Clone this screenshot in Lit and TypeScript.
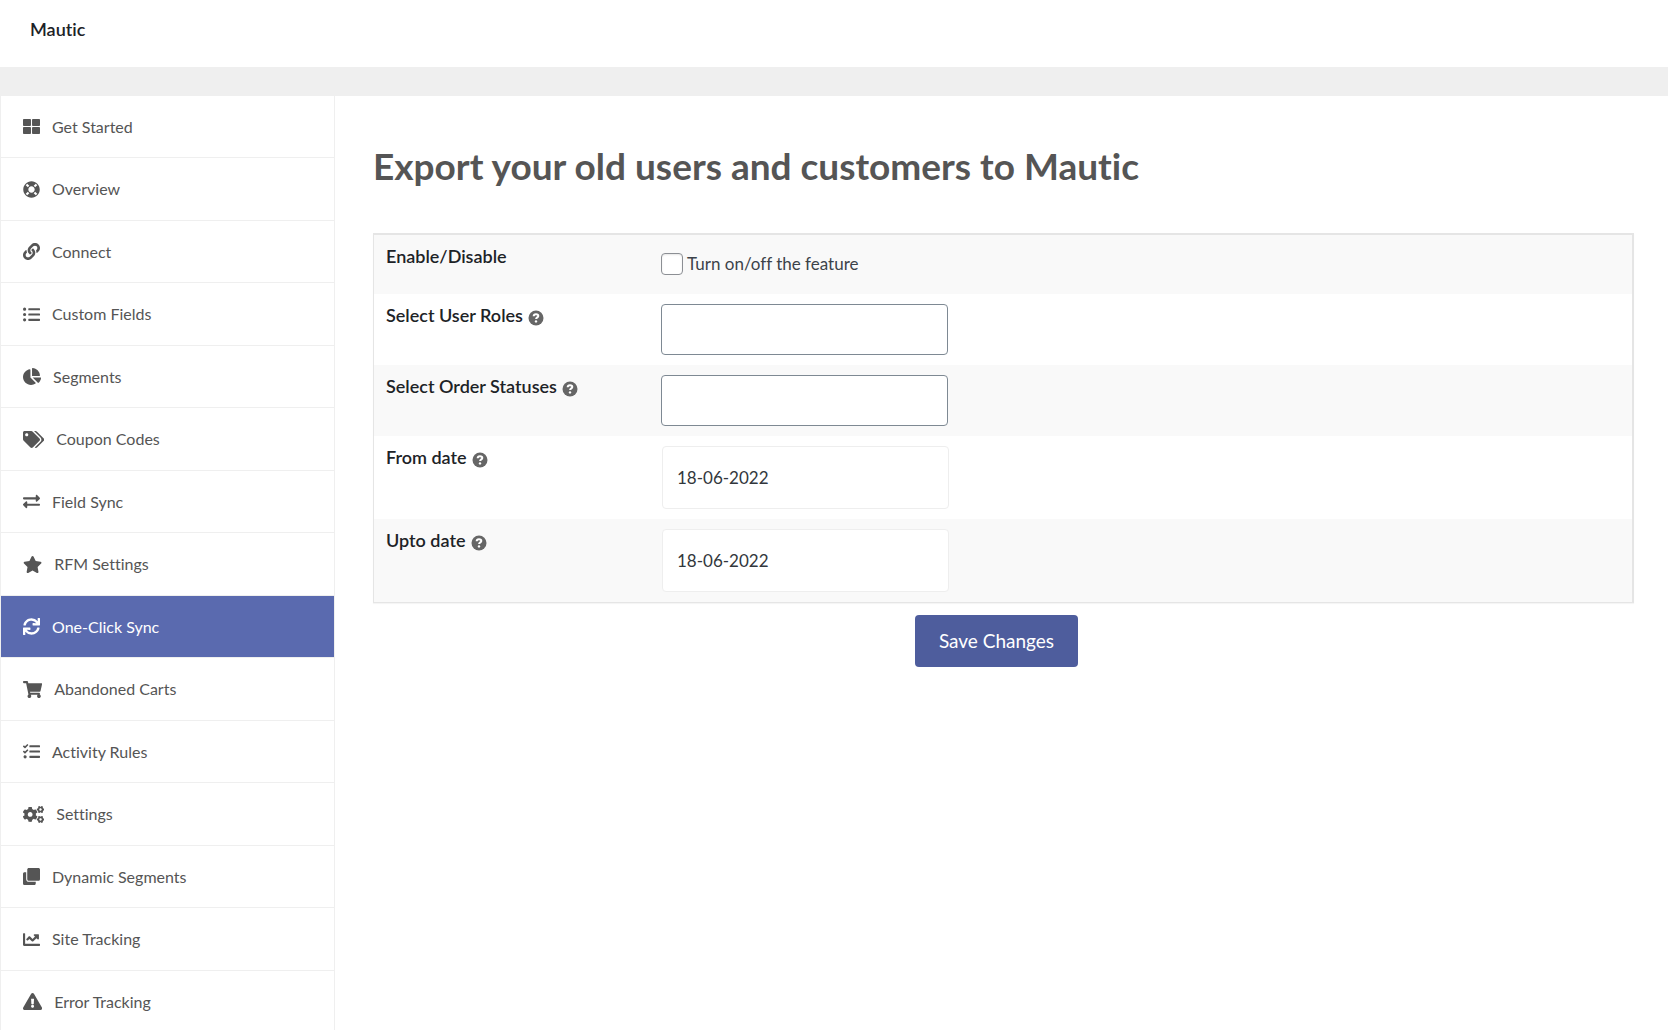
import { LitElement, html, svg, css, nothing } from "lit";
import { customElement, property, state } from "lit/decorators.js";
import { classMap } from "lit/directives/class-map.js";

const gear =
  "M512.1 191l-8.2 14.3c-3 5.3-9.4 7.5-15.1 5.4-11.8-4.4-22.6-10.7-32.1-18.6-4.6-3.8-5.8-10.5-2.8-15.7l8.2-14.3c-6.9-8-12.3-17.3-15.9-27.4h-16.5c-6 0-11.2-4.3-12.2-10.3-2-12-2.1-24.6 0-37.1 1-6 6.2-10.4 12.2-10.4h16.5c3.6-10.1 9-19.4 15.9-27.4l-8.2-14.3c-3-5.2-1.9-11.9 2.8-15.7 9.5-7.9 20.4-14.2 32.1-18.6 5.7-2.1 12.1.1 15.1 5.4l8.2 14.3c10.5-1.9 21.2-1.9 31.7 0L552 6.3c3-5.3 9.4-7.5 15.1-5.4 11.8 4.4 22.6 10.7 32.1 18.6 4.6 3.8 5.8 10.5 2.8 15.7l-8.2 14.3c6.9 8 12.3 17.3 15.9 27.4h16.5c6 0 11.2 4.3 12.2 10.3 2 12 2.1 24.6 0 37.1-1 6-6.2 10.4-12.2 10.4h-16.5c-3.6 10.1-9 19.4-15.9 27.4l8.2 14.3c3 5.2 1.9 11.9-2.8 15.7-9.5 7.9-20.4 14.2-32.1 18.6-5.7 2.1-12.1-.1-15.1-5.4l-8.2-14.3c-10.4 1.9-21.2 1.9-31.7 0zm-10.5-58.8c38.5 29.6 82.4-14.3 52.8-52.8-38.5-29.7-82.4 14.3-52.8 52.8z";

// width is the viewBox width; every glyph is 512 units tall
const ICONS: Record<string, { width: number; body: unknown }> = {
  grid: {
    width: 512,
    body: svg`<path d="M296 32h192c13.255 0 24 10.745 24 24v160c0 13.255-10.745 24-24 24H296c-13.255 0-24-10.745-24-24V56c0-13.255 10.745-24 24-24zm-80 0H24C10.745 32 0 42.745 0 56v160c0 13.255 10.745 24 24 24h192c13.255 0 24-10.745 24-24V56c0-13.255-10.745-24-24-24zM0 296v160c0 13.255 10.745 24 24 24h192c13.255 0 24-10.745 24-24V296c0-13.255-10.745-24-24-24H24c-13.255 0-24 10.745-24 24zm296 184h192c13.255 0 24-10.745 24-24V296c0-13.255-10.745-24-24-24H296c-13.255 0-24 10.745-24 24v160c0 13.255 10.745 24 24 24z"/>`,
  },
  ring: {
    width: 512,
    body: svg`<path d="M256 8C119.033 8 8 119.033 8 256s111.033 248 248 248 248-111.033 248-248S392.967 8 256 8zm173.696 119.559l-63.399 63.399c-10.987-18.559-26.67-34.252-45.255-45.255l63.399-63.399a218.396 218.396 0 0 1 45.255 45.255zM256 352c-53.019 0-96-42.981-96-96s42.981-96 96-96 96 42.981 96 96-42.981 96-96 96zM127.559 82.304l63.399 63.399c-18.559 10.987-34.252 26.67-45.255 45.255l-63.399-63.399a218.372 218.372 0 0 1 45.255-45.255zM82.304 384.441l63.399-63.399c10.987 18.559 26.67 34.252 45.255 45.255l-63.399 63.399a218.396 218.396 0 0 1-45.255-45.255zm302.137 45.255l-63.399-63.399c18.559-10.987 34.252-26.67 45.255-45.255l63.399 63.399a218.403 218.403 0 0 1-45.255 45.255z"/>`,
  },
  link: {
    width: 512,
    body: svg`<path d="M326.612 185.391c59.747 59.809 58.927 155.698.36 214.59-.11.12-.24.25-.36.37l-67.2 67.2c-59.27 59.27-155.699 59.262-214.96 0-59.27-59.26-59.27-155.7 0-214.96l37.106-37.106c9.84-9.84 26.786-3.3 27.294 10.606.648 17.722 3.826 35.527 9.69 52.721 1.986 5.822.567 12.262-3.783 16.612l-13.087 13.087c-28.026 28.026-28.905 73.66-1.155 101.96 28.024 28.579 74.086 28.749 102.325.51l67.2-67.19c28.191-28.191 28.073-73.757 0-101.83-3.701-3.694-7.429-6.564-10.341-8.569a16.037 16.037 0 0 1-6.947-12.606c-.396-10.567 3.348-21.456 11.698-29.806l21.054-21.055c5.521-5.521 14.182-6.199 20.584-1.731a152.482 152.482 0 0 1 20.522 17.197zM467.547 44.449c-59.261-59.262-155.69-59.27-214.96 0l-67.2 67.2c-.12.12-.25.25-.36.37-58.566 58.892-59.387 154.781.36 214.59a152.454 152.454 0 0 0 20.521 17.196c6.402 4.468 15.064 3.789 20.584-1.731l21.054-21.055c8.35-8.35 12.094-19.239 11.698-29.806a16.037 16.037 0 0 0-6.947-12.606c-2.912-2.005-6.64-4.875-10.341-8.569-28.073-28.073-28.191-73.639 0-101.83l67.2-67.19c28.239-28.239 74.3-28.069 102.325.51 27.75 28.3 26.872 73.934-1.155 101.96l-13.087 13.087c-4.35 4.35-5.769 10.79-3.783 16.612 5.864 17.194 9.042 34.999 9.69 52.721.509 13.906 17.454 20.446 27.294 10.606l37.106-37.106c59.271-59.259 59.271-155.699.001-214.959z"/>`,
  },
  list: {
    width: 512,
    body: svg`<path d="M48 48a48 48 0 1 0 48 48 48 48 0 0 0-48-48zm0 160a48 48 0 1 0 48 48 48 48 0 0 0-48-48zm0 160a48 48 0 1 0 48 48 48 48 0 0 0-48-48zm448 16H176a16 16 0 0 0-16 16v32a16 16 0 0 0 16 16h320a16 16 0 0 0 16-16v-32a16 16 0 0 0-16-16zm0-320H176a16 16 0 0 0-16 16v32a16 16 0 0 0 16 16h320a16 16 0 0 0 16-16V80a16 16 0 0 0-16-16zm0 160H176a16 16 0 0 0-16 16v32a16 16 0 0 0 16 16h320a16 16 0 0 0 16-16v-32a16 16 0 0 0-16-16z"/>`,
  },
  pie: {
    width: 544,
    body: svg`<path d="M527.79 288H290.5l158.03 158.03c6.04 6.04 15.98 6.53 22.19.68 38.7-36.46 65.32-85.61 73.13-140.86 1.34-9.46-6.51-17.85-16.06-17.85zm-15.83-64.8C503.72 103.74 408.26 8.28 288.8.04 279.68-.59 272 7.1 272 16.24V240h223.77c9.14 0 16.82-7.68 16.19-16.8zM224 288V50.71c0-9.55-8.39-17.4-17.84-16.06C86.99 51.49-4.1 155.6.14 280.37 4.5 408.51 114.83 513.59 243.03 511.98c50.4-.63 96.97-16.87 135.26-44.03 7.9-5.6 8.42-17.23 1.57-24.08L224 288z"/>`,
  },
  tags: {
    width: 640,
    body: svg`<path d="M497.941 225.941L286.059 14.059A48 48 0 0 0 252.118 0H48C21.49 0 0 21.49 0 48v204.118a48 48 0 0 0 14.059 33.941l211.882 211.882c18.744 18.745 49.136 18.746 67.882 0l204.118-204.118c18.745-18.745 18.745-49.137 0-67.882zM112 160c-26.51 0-48-21.49-48-48s21.49-48 48-48 48 21.49 48 48-21.49 48-48 48zm513.941 133.823L421.823 497.941c-18.745 18.745-49.137 18.745-67.882 0l-.36-.36L527.64 323.522c16.999-16.999 26.36-39.6 26.36-63.64s-9.362-46.641-26.36-63.64L331.397 0h48.721a48 48 0 0 1 33.941 14.059l211.882 211.882c18.745 18.745 18.745 49.137 0 67.882z"/>`,
  },
  exchange: {
    width: 512,
    body: svg`<path d="M0 168v-16c0-13.255 10.745-24 24-24h360V80c0-21.367 25.899-32.042 40.971-16.971l80 80c9.372 9.373 9.372 24.569 0 33.941l-80 80C409.956 271.982 384 261.456 384 240v-48H24c-13.255 0-24-10.745-24-24zm488 152H128v-48c0-21.314-25.862-32.08-40.971-16.971l-80 80c-9.372 9.373-9.372 24.569 0 33.941l80 80C102.057 463.997 128 453.437 128 432v-48h360c13.255 0 24-10.745 24-24v-16c0-13.255-10.745-24-24-24z"/>`,
  },
  star: {
    width: 576,
    body: svg`<path d="M259.3 17.8L194 150.2 47.9 171.5c-26.2 3.8-36.7 36.1-17.7 54.6l105.7 103-25 145.5c-4.5 26.3 23.2 46 46.4 33.7L288 439.6l130.7 68.7c23.2 12.2 50.9-7.4 46.4-33.7l-25-145.5 105.7-103c19-18.5 8.5-50.8-17.7-54.6L382 150.2 316.7 17.8c-11.7-23.6-45.6-23.9-57.4 0z"/>`,
  },
  sync: {
    width: 512,
    body: svg`<path d="M440.65 12.57l4 82.77A247.16 247.16 0 0 0 255.83 8C134.73 8 33.91 94.92 12.29 209.82A12 12 0 0 0 24.09 224h49.05a12 12 0 0 0 11.67-9.26 175.91 175.91 0 0 1 317-56.94l-101.46-4.86a12 12 0 0 0-12.57 12v47.41a12 12 0 0 0 12 12H500a12 12 0 0 0 12-12V12a12 12 0 0 0-12-12h-47.37a12 12 0 0 0-11.98 12.57zM255.83 432a175.61 175.61 0 0 1-146-77.8l101.8 4.87a12 12 0 0 0 12.57-12v-47.4a12 12 0 0 0-12-12H12a12 12 0 0 0-12 12V500a12 12 0 0 0 12 12h47.35a12 12 0 0 0 12-12.6l-4.15-82.57A247.17 247.17 0 0 0 255.83 504c121.11 0 221.93-86.92 243.55-201.82a12 12 0 0 0-11.8-14.18h-49.05a12 12 0 0 0-11.67 9.26A175.86 175.86 0 0 1 255.83 432z"/>`,
  },
  cart: {
    width: 576,
    body: svg`<path d="M528.12 301.319l47.273-208C578.806 78.301 567.391 64 551.99 64H159.208l-9.166-44.81C147.758 8.021 137.93 0 126.529 0H24C10.745 0 0 10.745 0 24v16c0 13.255 10.745 24 24 24h69.883l70.248 343.435C147.325 417.1 136 435.222 136 456c0 30.928 25.072 56 56 56s56-25.072 56-56c0-15.674-6.447-29.835-16.824-40h209.647C430.447 426.165 424 440.326 424 456c0 30.928 25.072 56 56 56s56-25.072 56-56c0-22.172-12.888-41.332-31.579-50.405l5.517-24.276c3.413-15.018-8.002-29.319-23.403-29.319H218.117l-6.545-32h293.145c11.206 0 20.92-7.754 23.403-18.681z"/>`,
  },
  tasks: {
    width: 512,
    body: svg`<path d="M139.61 35.5a12 12 0 0 0-17 0L58.93 98.81l-22.7-22.12a12 12 0 0 0-17 0L3.53 92.41a12 12 0 0 0 0 17l47.59 47.4a12.78 12.78 0 0 0 17.61 0l15.59-15.62L156.52 69a12.09 12.09 0 0 0 .09-17zm0 159.19a12 12 0 0 0-17 0l-63.68 63.72-22.7-22.1a12 12 0 0 0-17 0L3.53 252a12 12 0 0 0 0 17L51 316.5a12.77 12.77 0 0 0 17.6 0l15.7-15.69 72.2-72.22a12 12 0 0 0 .09-16.9zM64 368c-26.49 0-48.59 21.5-48.59 48S37.53 464 64 464a48 48 0 0 0 0-96zm432 16H208a16 16 0 0 0-16 16v32a16 16 0 0 0 16 16h288a16 16 0 0 0 16-16v-32a16 16 0 0 0-16-16zm0-320H208a16 16 0 0 0-16 16v32a16 16 0 0 0 16 16h288a16 16 0 0 0 16-16V80a16 16 0 0 0-16-16zm0 160H208a16 16 0 0 0-16 16v32a16 16 0 0 0 16 16h288a16 16 0 0 0 16-16v-32a16 16 0 0 0-16-16z"/>`,
  },
  cogs: {
    width: 640,
    body: svg`<path d=${gear}/><path d=${gear} transform="translate(0 300)"/><path d="M386.3 286.1l33.7 16.8c10.1 5.8 14.5 18.1 10.5 29.1-8.9 24.2-26.4 46.4-42.6 65.8-7.4 8.9-20.2 11.1-30.3 5.3l-29.1-16.8c-16 13.7-34.6 24.6-54.9 31.7v33.6c0 11.6-8.3 21.6-19.7 23.6-24.6 4.2-50.4 4.4-75.9 0-11.5-2-20-11.9-20-23.6V418c-20.3-7.2-38.9-18-54.9-31.7L74 403c-10 5.8-22.9 3.6-30.3-5.3-16.2-19.4-33.3-41.6-42.2-65.7-4-10.9.4-23.2 10.5-29.1l33.3-16.8c-3.9-20.9-3.9-42.4 0-63.4L12 205.8c-10.1-5.8-14.6-18.1-10.5-29 8.9-24.2 26-46.4 42.2-65.8 7.4-8.9 20.2-11.1 30.3-5.3l29.1 16.8c16-13.7 34.6-24.6 54.9-31.7V57.1c0-11.5 8.2-21.5 19.6-23.5 24.6-4.2 50.5-4.4 76-.1 11.5 2 20 11.9 20 23.6v33.6c20.3 7.2 38.9 18 54.9 31.7l29.1-16.8c10-5.8 22.9-3.6 30.3 5.3 16.2 19.4 33.2 41.6 42.1 65.8 4 10.9.1 23.2-10 29.1l-33.7 16.8c3.9 21 3.9 42.5 0 63.5zm-117.6 21.1c59.2-77-28.7-164.9-105.7-105.7-59.2 77 28.7 164.9 105.7 105.7z"/>`,
  },
  clone: {
    width: 512,
    body: svg`<path d="M464 0c26.51 0 48 21.49 48 48v288c0 26.51-21.49 48-48 48H176c-26.51 0-48-21.49-48-48V48c0-26.51 21.49-48 48-48h288M176 416c-44.112 0-80-35.888-80-80V128H48c-26.51 0-48 21.49-48 48v288c0 26.51 21.49 48 48 48h288c26.51 0 48-21.49 48-48v-48H176z"/>`,
  },
  chart: {
    width: 512,
    body: svg`<path d="M496 384H64V80c0-8.84-7.16-16-16-16H16C7.16 64 0 71.16 0 80v336c0 17.67 14.33 32 32 32h464c8.84 0 16-7.16 16-16v-32c0-8.84-7.16-16-16-16zM464 96H345.94c-21.38 0-32.09 25.85-16.97 40.97l32.4 32.4L288 242.75l-73.37-73.37c-12.5-12.5-32.76-12.5-45.25 0l-68.69 68.69c-6.25 6.25-6.25 16.38 0 22.63l22.62 22.62c6.25 6.25 16.38 6.25 22.63 0L192 237.25l73.37 73.37c12.5 12.5 32.76 12.5 45.25 0l96-96 32.4 32.4c15.12 15.12 40.97 4.41 40.97-16.97V112c.01-8.84-7.15-16-15.99-16z"/>`,
  },
  warning: {
    width: 576,
    body: svg`<path d="M569.517 440.013C587.975 472.007 564.806 512 527.94 512H48.054c-36.937 0-59.999-40.055-41.577-71.987L246.423 23.985c18.467-32.009 64.72-31.951 83.154 0l239.94 416.028zM288 354c-25.405 0-46 20.595-46 46s20.595 46 46 46 46-20.595 46-46-20.595-46-46-46zm-43.673-165.346l7.418 136c.347 6.364 5.609 11.346 11.982 11.346h48.546c6.373 0 11.635-4.982 11.982-11.346l7.418-136c.375-6.874-5.098-12.654-11.983-12.654h-63.383c-6.884 0-12.356 5.78-11.981 12.654z"/>`,
  },
};

const NAV = [
  { label: "Get Started", icon: "grid" },
  { label: "Overview", icon: "ring" },
  { label: "Connect", icon: "link" },
  { label: "Custom Fields", icon: "list" },
  { label: "Segments", icon: "pie" },
  { label: "Coupon Codes", icon: "tags" },
  { label: "Field Sync", icon: "exchange" },
  { label: "RFM Settings", icon: "star" },
  { label: "One-Click Sync", icon: "sync" },
  { label: "Abandoned Carts", icon: "cart" },
  { label: "Activity Rules", icon: "tasks" },
  { label: "Settings", icon: "cogs" },
  { label: "Dynamic Segments", icon: "clone" },
  { label: "Site Tracking", icon: "chart" },
  { label: "Error Tracking", icon: "warning" },
];

@customElement("nav-icon")
export class NavIcon extends LitElement {
  @property() name = "grid";

  static styles = css`
    :host {
      display: block;
    }
    .glyph {
      display: block;
      height: 17px;
      fill: currentColor;
    }
  `;

  render() {
    const icon = ICONS[this.name];
    return html`<svg class="glyph" viewBox="0 0 ${icon.width} 512" aria-hidden="true">${icon.body}</svg>`;
  }
}

@customElement("side-nav")
export class SideNav extends LitElement {
  @state() private current = "One-Click Sync";

  static styles = css`
    :host {
      display: block;
      border-left: 1px solid #efefef;
      border-right: 1px solid #efefef;
      background: #fff;
    }
    .list {
      list-style: none;
      margin: 0;
      padding: 0;
    }
    .item {
      height: 61px;
      border-bottom: 1px solid #efefef;
    }
    .item:nth-child(even) {
      height: 62px;
    }
    .link {
      display: flex;
      align-items: center;
      gap: 12px;
      height: 100%;
      padding: 0 22px;
      font-size: 16px;
      line-height: 24px;
      color: #555;
      text-decoration: none;
    }
    .current {
      background: #5a6aaf;
      color: #fff;
    }
  `;

  private select(event: Event, label: string) {
    event.preventDefault();
    this.current = label;
  }

  render() {
    return html`<nav>
      <ul class="list">
        ${NAV.map(
          (item) => html`<li class="item">
            <a
              class=${classMap({ link: true, current: item.label === this.current })}
              href="#"
              @click=${(e: Event) => this.select(e, item.label)}
              ><nav-icon name=${item.icon}></nav-icon><span>${item.label}</span></a
            >
          </li>`,
        )}
      </ul>
    </nav>`;
  }
}

@customElement("export-form")
export class ExportForm extends LitElement {
  static styles = css`
    :host {
      display: block;
    }
    .title {
      margin: 0 0 41px;
      font-size: 37px;
      line-height: 52px;
      font-weight: 700;
      color: #555;
    }
    .form {
      display: flex;
      flex-direction: column;
      gap: 12px;
    }
    .table {
      width: 100%;
      border: 2px solid #e5e5e5;
      border-left-width: 1px;
      border-bottom-width: 1px;
      border-spacing: 0;
      box-shadow: 0 1px 1px rgba(0, 0, 0, 0.04);
      box-sizing: border-box;
    }
    .row:nth-child(odd) {
      background: #f9f9f9;
    }
    .head,
    .cell {
      padding: 9px 12px;
      vertical-align: top;
      text-align: left;
    }
    .head {
      width: 263px;
      font-weight: 600;
      font-size: 18px;
      line-height: 24px;
      color: #1d2327;
    }
    .cell {
      padding: 10px 0;
    }
    .name {
      display: flex;
      align-items: center;
      gap: 5px;
    }
    .help {
      width: 16px;
      height: 16px;
      margin-top: 6px;
    }
    .toggle {
      display: flex;
      align-items: center;
      gap: 4px;
      height: 37px;
      padding-bottom: 2px;
      font-size: 17px;
      line-height: 24px;
      color: #3c434a;
    }
    .check {
      appearance: none;
      width: 22px;
      height: 22px;
      margin: 0;
      border: 1px solid #8c8f94;
      border-radius: 4px;
      background: #fff;
      box-shadow: inset 0 1px 2px rgba(0, 0, 0, 0.1);
    }
    .check:checked {
      background: #5a6aaf;
    }
    .box {
      display: block;
      box-sizing: border-box;
      width: 287px;
      height: 51px;
      margin: 0;
      padding: 0 14px;
      border: 1px solid #7e8993;
      border-radius: 4px;
      background: #fff;
      font-family: inherit;
      font-size: 17px;
      color: #32373c;
    }
    .date {
      height: 63px;
      margin-left: 1px;
      border-color: #eee;
    }
    .save {
      align-self: center;
      margin-right: 14px;
      padding: 12px 24px;
      border: 0;
      border-radius: 4px;
      background: #4e5d9d;
      color: #fff;
      font-family: inherit;
      font-size: 19px;
      line-height: 28px;
    }
  `;

  private row(id: string, label: string, help: boolean, field: unknown) {
    return html`<tr class="row">
      <th class="head" scope="row">
        <span class="name"
          ><label for=${id}>${label}</label>${help
            ? html`<svg class="help" viewBox="0 0 16 16" aria-hidden="true">
                <circle cx="8" cy="8" r="7.5" fill="#666" />
                <path d="M5.7 6.2C5.7 4.9 6.7 4.2 8 4.2s2.3.7 2.3 1.8c0 1.4-2.2 1.4-2.2 3" fill="none" stroke="#fff" stroke-width="2" />
                <circle cx="8" cy="11.4" r="1.2" fill="#fff" />
              </svg>`
            : nothing}</span
        >
      </th>
      <td class="cell">${field}</td>
    </tr>`;
  }

  render() {
    return html`
      <h1 class="title">Export your old users and customers to Mautic</h1>
      <form class="form" @submit=${(e: Event) => e.preventDefault()}>
        <table class="table">
          <tbody>
            ${this.row(
              "enable",
              "Enable/Disable",
              false,
              html`<label class="toggle"><input class="check" id="enable" type="checkbox" />Turn on/off the feature</label>`,
            )}
            ${this.row("roles", "Select User Roles", true, html`<input class="box" id="roles" type="text" />`)}
            ${this.row("statuses", "Select Order Statuses", true, html`<input class="box" id="statuses" type="text" />`)}
            ${this.row("from", "From date", true, html`<input class="box date" id="from" type="text" value="18-06-2022" />`)}
            ${this.row("upto", "Upto date", true, html`<input class="box date" id="upto" type="text" value="18-06-2022" />`)}
          </tbody>
        </table>
        <button class="save" type="submit">Save Changes</button>
      </form>
    `;
  }
}

@customElement("app-root")
export class AppRoot extends LitElement {
  static styles = css`
    :host {
      display: flex;
      flex-direction: column;
      height: 100vh;
      overflow: hidden;
      background: #fff;
      font-family: Lato, "Liberation Sans", sans-serif;
      font-variant-ligatures: none;
    }
    .header {
      padding: 17px 30px 26px;
      border-bottom: 29px solid #efefef;
      font-size: 18px;
      line-height: 24px;
      font-weight: 600;
      color: #1d2327;
    }
    .body {
      display: flex;
      flex: 1;
      min-height: 0;
    }
    .side {
      flex: none;
      width: 333px;
    }
    .main {
      flex: 1;
      min-width: 0;
      padding: 44px 34px 40px 38px;
    }
  `;

  render() {
    return html`
      <header class="header">Mautic</header>
      <div class="body">
        <side-nav class="side"></side-nav>
        <main class="main"><export-form></export-form></main>
      </div>
    `;
  }
}
